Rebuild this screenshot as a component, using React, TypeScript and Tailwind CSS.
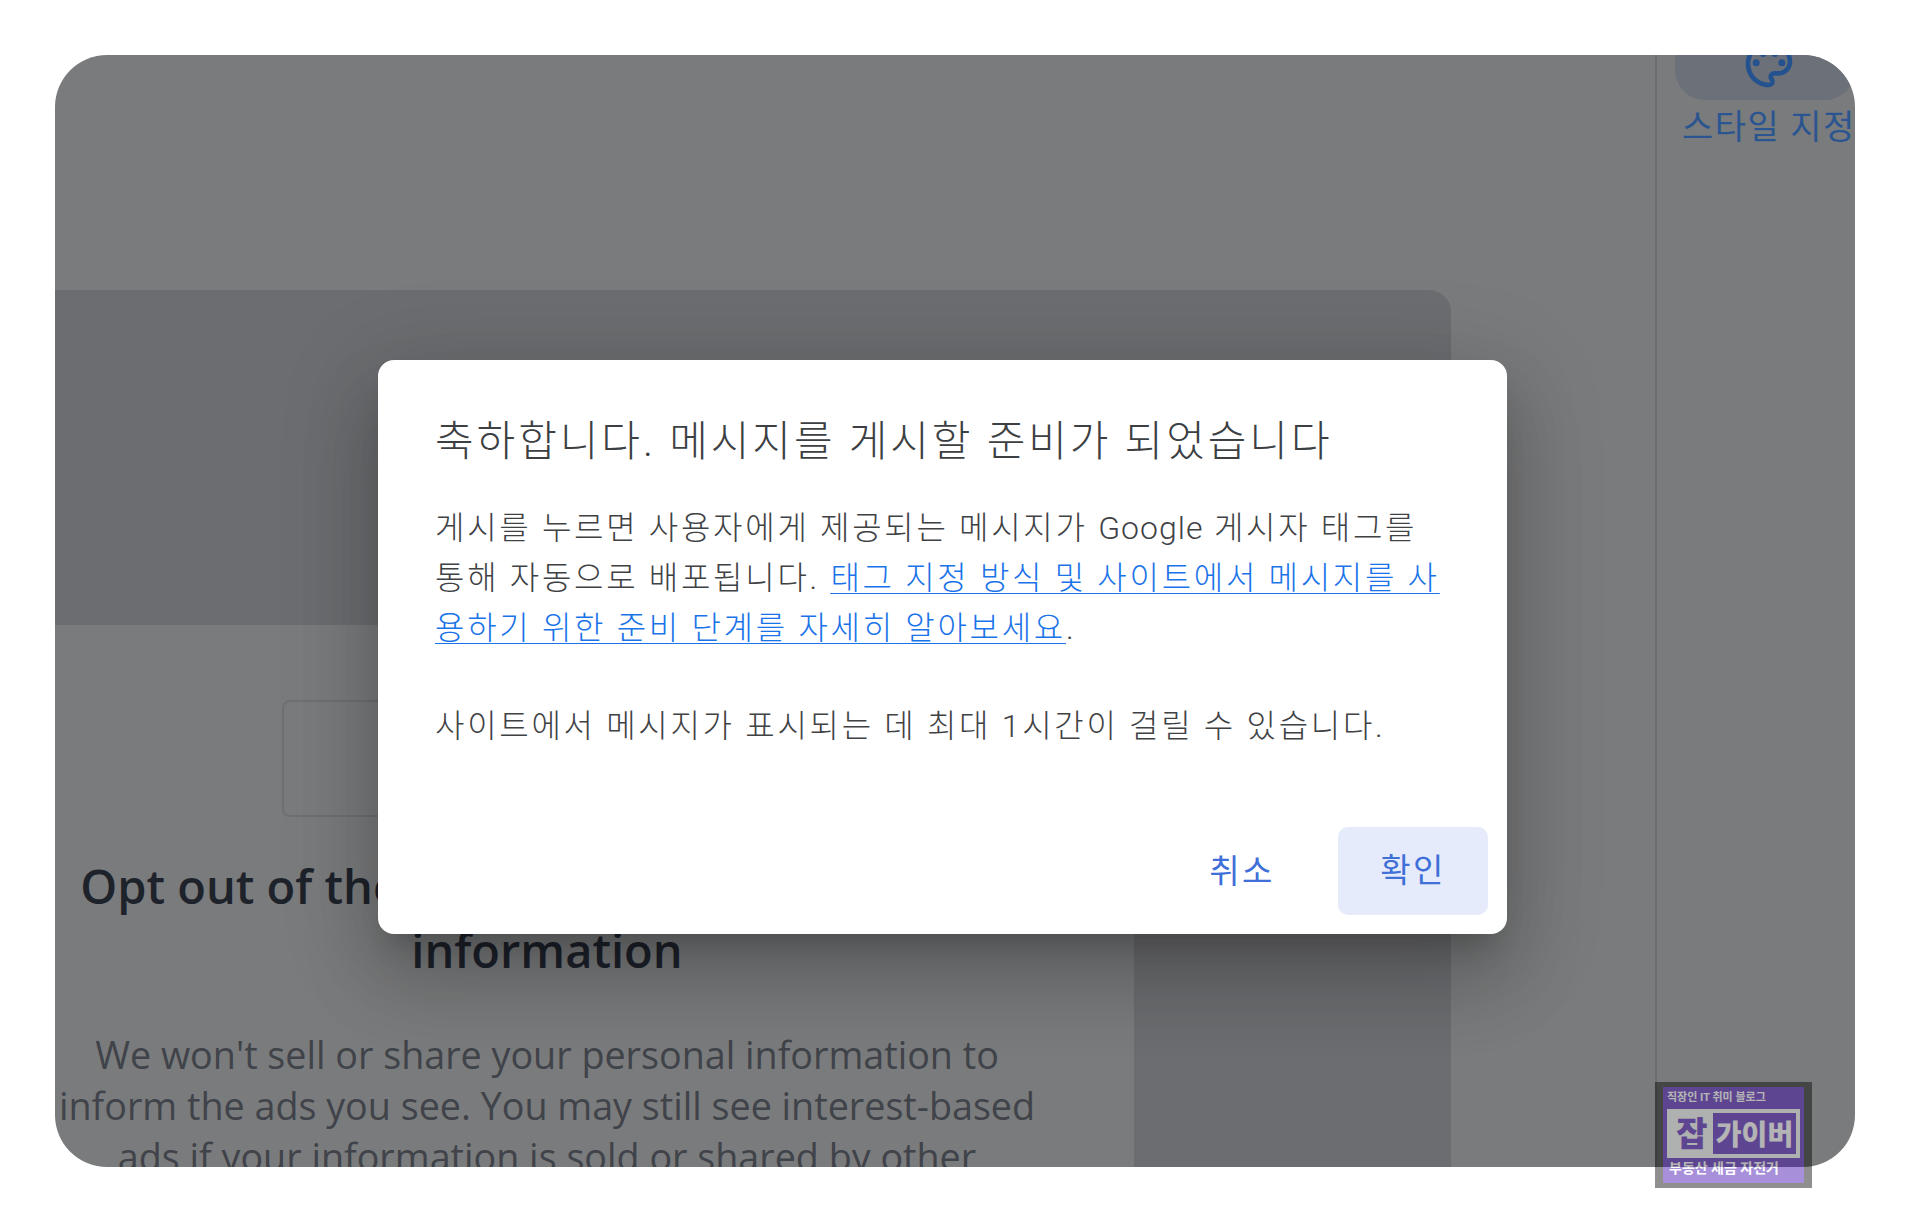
import { MdOutlinePalette } from "react-icons/md";

const font = "font-['Roboto','Noto_Sans_CJK_KR',sans-serif]";
const openSans = "font-['Open_Sans','Noto_Sans_CJK_KR',sans-serif]";

function Badge() {
  return (
    <div className={`absolute left-[1655px] top-[1082px] flex h-[106px] w-[157px] flex-col bg-black px-[8px] py-[5px] opacity-[0.436] ${font}`}>
      <div className="flex h-[24px] items-center bg-[#3a00ac] px-[4px] text-[11px] font-bold whitespace-nowrap text-white">직장인 IT 취미 블로그</div>
      <div className="flex h-[49px] bg-[#3a00ac] px-[4px]">
        <div className="flex w-full items-center bg-[#f5f5f5] p-[4px]">
          <div className="w-[42px] text-center text-[34px] leading-none font-black text-[#3a00ac]">잡</div>
          <div className="flex h-[41px] flex-1 items-center justify-center bg-[#3a00ac] pt-[4px] text-[28px] leading-none font-black text-white">가이버</div>
        </div>
      </div>
      <div className="flex flex-1 items-center bg-[#3a00ac] px-[6px] pb-[4px] text-[14px] font-bold whitespace-nowrap text-white">부동산 세금 자전거</div>
    </div>
  );
}

function Dialog() {
  return (
    <div className={`absolute left-[323px] top-[305px] flex h-[574px] w-[1129px] flex-col rounded-[16px] bg-white pt-[57px] shadow-[0_48px_76px_6px_rgba(0,0,0,0.14),0_18px_92px_16px_rgba(0,0,0,0.12),0_22px_30px_-14px_rgba(0,0,0,0.2)] ${font}`}>
      <h2 className="pl-[57px] text-[42px] leading-[50px] font-light tracking-[2.95px] whitespace-nowrap text-[#3c4043]">축하합니다. 메시지를 게시할 준비가 되었습니다</h2>
      <div className="mt-[36px] pl-[57px] text-[32px] leading-[50px] font-light tracking-[2.7px] whitespace-nowrap text-[#3f4245]">
        <p>
          게시를 누르면 사용자에게 제공되는 메시지가 <span className="tracking-[1px]">Google</span> 게시자 태그를
          <br />
          통해 자동으로 배포됩니다. <a className="text-[#1a73e8] underline decoration-1 underline-offset-[4px]">태그 지정 방식 및 사이트에서 메시지를 사</a>
          <br />
          <a className="text-[#1a73e8] underline decoration-1 underline-offset-[4px]">용하기 위한 준비 단계를 자세히 알아보세요</a>.
        </p>
        <p className="mt-[48px]">사이트에서 메시지가 표시되는 데 최대 1시간이 걸릴 수 있습니다.</p>
      </div>
      <div className="mt-auto flex items-center justify-end pr-[19px] pb-[19px] text-[33px] tracking-[2.4px] text-[#3f6fd8]">
        <button className="mr-[42px] h-[88px] w-[108px] pt-[2px]">취소</button>
        <button className="h-[88px] w-[150px] rounded-[10px] bg-[#e5ebfa]">확인</button>
      </div>
    </div>
  );
}

export default function App() {
  return (
    <div className="relative h-[1223px] w-[1910px] overflow-hidden bg-white">
      <div className="relative left-[55px] top-[55px] flex h-[1112px] w-[1800px] overflow-hidden rounded-[52px] bg-[#7a7b7c]">
        <main className="flex w-[1600px] flex-col pt-[235px]">
          <div className="h-[335px] w-[1396px] rounded-tr-[22px] bg-[#6c6d70]" />
          <div className="flex min-h-0 w-[1396px] flex-1">
            <div className={`w-[1079px] overflow-hidden ${openSans}`}>
              <div className="flex w-[984px] flex-col items-center text-center">
                <div className="mt-[75px] h-[117px] w-[530px] rounded-[8px] border-2 border-[#6f7071]" />
                <h3 className="mt-[37px] text-[47px] leading-[64px] font-semibold whitespace-nowrap text-[#1d222b]">
                  Opt out of the sale or sharing of personal
                  <br />
                  information
                </h3>
                <p className="mt-[47px] text-[37.7px] leading-[51px] whitespace-nowrap text-[#404349]">
                  We won't sell or share your personal information to
                  <br />
                  inform the ads you see. You may still see interest-based
                  <br />
                  ads if your information is sold or shared by other
                </p>
              </div>
            </div>
            <div className="flex-1 bg-[#6c6d70]" />
          </div>
        </main>
        <aside className={`flex w-[200px] flex-col items-center border-l-2 border-[#6c6d6e] pl-[18px] ${font}`}>
          <div className="flex h-[45px] w-full items-end justify-center overflow-hidden rounded-b-[30px] bg-[#6c7079] pl-[8px]">
            <MdOutlinePalette className="mb-[8px] shrink-0 text-[56px] text-[#24528f]" />
          </div>
          <div className="mt-[5px] w-full pl-[7px] text-[34px] leading-[44px] tracking-[1.5px] whitespace-nowrap text-[#2a5590]">스타일 지정</div>
        </aside>
        <Dialog />
      </div>
      <Badge />
    </div>
  );
}
